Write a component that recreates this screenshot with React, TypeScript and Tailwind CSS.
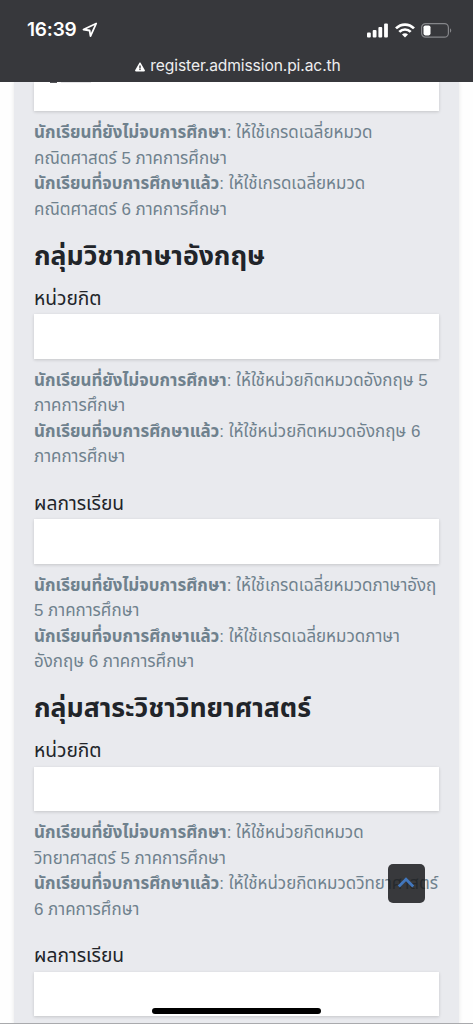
import { FaExclamationTriangle } from 'react-icons/fa'

const current = 'นักเรียนที่ยังไม่จบการศึกษา'
const graduated = 'นักเรียนที่จบการศึกษาแล้ว'

type HintProps = { lines: [string, string, string, string] }

function Hint({ lines }: HintProps) {
  return (
    <div className="mt-[9px] text-[16.93px] leading-[25.5px] whitespace-nowrap text-[#6f818d]">
      <p><b>{current}</b>: {lines[0]}</p>
      <p>{lines[1]}</p>
      <p><b>{graduated}</b>: {lines[2]}</p>
      <p>{lines[3]}</p>
    </div>
  )
}

function Field({ label, className }: { label: string; className: string }) {
  return (
    <label className={`block ${className}`}>
      <span className="block h-[25px] text-[19.2px] leading-[25px] text-[#212429]">{label}</span>
      <input type="text" className="mt-[3.5px] block h-[44.5px] w-full bg-white shadow-[0_1px_3px_rgba(0,0,0,0.16)] outline-none" />
    </label>
  )
}

function Heading({ children }: { children: string }) {
  return <h2 className="mt-[15.5px] h-[38px] text-[26.6px] leading-[37px] font-bold whitespace-nowrap text-[#212429]">{children}</h2>
}

function StatusBar() {
  return (
    <header className="relative z-10 h-[82px] shrink-0 bg-[#37383c] text-white">
      <div className="flex h-[60px] items-center pr-[21px] pl-[27px]">
        <span className="font-['Inter',sans-serif] text-[19px] leading-6 font-semibold tracking-[-0.2px]">16:39</span>
        <svg className="ml-[5px] h-[16px] w-[16px]" viewBox="0 0 16 16" fill="none" stroke="currentColor" strokeWidth="1.8" strokeLinejoin="round">
          <path d="M14.2 1.5 1.5 7.5 7.6 8.5 8.5 14.2Z" />
        </svg>
        <div className="ml-auto flex items-center">
          <svg className="h-[15px] w-[21px]" viewBox="0 0 21 15" fill="currentColor">
            <rect x="0" y="9.5" width="3.8" height="5" rx="1" />
            <rect x="5.7" y="7" width="3.8" height="7.5" rx="1" />
            <rect x="11.4" y="4" width="3.8" height="10.5" rx="1" />
            <rect x="17.1" y="0.5" width="3.8" height="14" rx="1" />
          </svg>
          <svg className="ml-[7px] h-[15px] w-[20px]" viewBox="0 0 20 15" fill="none" stroke="currentColor" strokeWidth="2.7">
            <path d="M1 5.4C6.1.3 13.9.3 19 5.4" />
            <path d="M4.3 8.9C7.5 5.7 12.5 5.7 15.7 8.9" />
            <path d="M10 14.4 7 11.4C8.7 9.8 11.3 9.8 13 11.4Z" fill="currentColor" stroke="none" />
          </svg>
          <svg className="ml-[6px] h-[15px] w-[31px]" viewBox="0 0 31 15" fill="none">
            <rect x="0.6" y="0.6" width="26.8" height="13.6" rx="4" stroke="#85868a" strokeWidth="1.2" />
            <rect x="2.5" y="2.4" width="7" height="10" rx="1.8" fill="white" />
            <path d="M29 5.2C30.7 6 30.7 8.9 29 9.7Z" fill="#85868a" />
          </svg>
        </div>
      </div>
      <div className="flex h-[11px] items-center justify-center gap-[5px] pl-[3px]">
        <FaExclamationTriangle className="mt-0.5 h-[10px] w-[10px]" />
        <span className="font-['Inter',sans-serif] text-[15.6px] leading-5 tracking-[-0.1px] text-[#eeeeef]">register.admission.pi.ac.th</span>
      </div>
    </header>
  )
}

function ScrollTop() {
  return (
    <button aria-label="เลื่อนขึ้น" className="absolute top-[864px] left-[388px] flex h-[39px] w-[36.5px] items-center justify-center rounded-[5px] bg-[#191a1c]/85">
      <svg className="mb-[3px] h-[11px] w-[18px]" viewBox="0 0 18 11" fill="none" stroke="#4277bd" strokeWidth="2.8">
        <path d="M1.8 9.5 9 2.3 16.2 9.5" />
      </svg>
    </button>
  )
}

export default function App() {
  return (
    <div className="relative flex h-[1024px] w-[473px] flex-col overflow-hidden bg-[#fefefe] font-['Liberation_Sans','Noto_Sans_Thai',sans-serif]">
      <StatusBar />
      <main className="mx-[14px] h-[942px] bg-[#e9eaee] px-5 shadow-[0_0_4px_rgba(0,0,0,0.1)]">
        {/* bottom of the field that is scrolled under the address bar */}
        <div className="h-[29px] bg-white shadow-[0_1px_3px_rgba(0,0,0,0.16)]">
          <div className="flex items-start pl-[16px]">
            <span className="h-px w-[7px] bg-[#55565a]" />
            <span className="ml-1 h-px w-[30px] bg-[#e4e4e6]" />
          </div>
        </div>
        <Hint lines={['ให้ใช้เกรดเฉลี่ยหมวด', 'คณิตศาสตร์ 5 ภาคการศึกษา', 'ให้ใช้เกรดเฉลี่ยหมวด', 'คณิตศาสตร์ 6 ภาคการศึกษา']} />
        <Heading>กลุ่มวิชาภาษาอังกฤษ</Heading>
        <Field label="หน่วยกิต" className="mt-[10px]" />
        <Hint lines={['ให้ใช้หน่วยกิตหมวดอังกฤษ 5', 'ภาคการศึกษา', 'ให้ใช้หน่วยกิตหมวดอังกฤษ 6', 'ภาคการศึกษา']} />
        <Field label="ผลการเรียน" className="mt-[21px]" />
        <Hint lines={['ให้ใช้เกรดเฉลี่ยหมวดภาษาอังฤ', '5 ภาคการศึกษา', 'ให้ใช้เกรดเฉลี่ยหมวดภาษา', 'อังกฤษ 6 ภาคการศึกษา']} />
        <Heading>กลุ่มสาระวิชาวิทยาศาสตร์</Heading>
        <Field label="หน่วยกิต" className="mt-[10px]" />
        <Hint lines={['ให้ใช้หน่วยกิตหมวด', 'วิทยาศาสตร์ 5 ภาคการศึกษา', 'ให้ใช้หน่วยกิตหมวดวิทยาศาสตร์', '6 ภาคการศึกษา']} />
        <Field label="ผลการเรียน" className="mt-[21px]" />
      </main>
      <ScrollTop />
      <div className="absolute bottom-[10px] left-[152px] h-[6px] w-[169px] rounded-full bg-black" />
      <div className="absolute bottom-0 left-0 h-px w-full bg-[#a9aaad]" />
    </div>
  )
}
